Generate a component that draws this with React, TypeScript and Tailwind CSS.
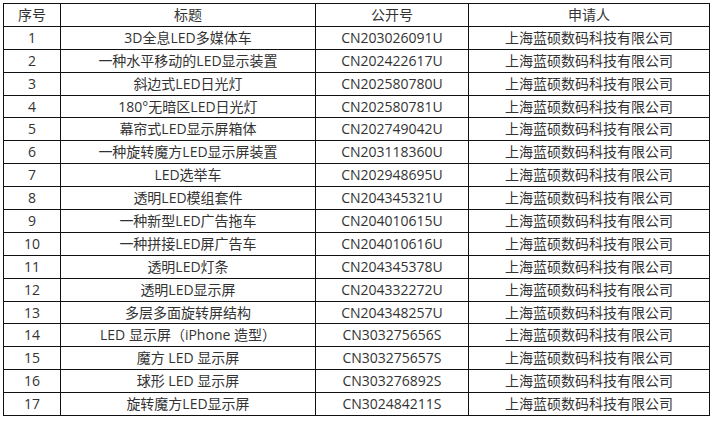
import React from "react";

const rows: [string, string, string][] = [
  ["1", "3D全息LED多媒体车", "CN203026091U"],
  ["2", "一种水平移动的LED显示装置", "CN202422617U"],
  ["3", "斜边式LED日光灯", "CN202580780U"],
  ["4", "180°无暗区LED日光灯", "CN202580781U"],
  ["5", "幕帘式LED显示屏箱体", "CN202749042U"],
  ["6", "一种旋转魔方LED显示屏装置", "CN203118360U"],
  ["7", "LED选举车", "CN202948695U"],
  ["8", "透明LED模组套件", "CN204345321U"],
  ["9", "一种新型LED广告拖车", "CN204010615U"],
  ["10", "一种拼接LED屏广告车", "CN204010616U"],
  ["11", "透明LED灯条", "CN204345378U"],
  ["12", "透明LED显示屏", "CN204332272U"],
  ["13", "多层多面旋转屏结构", "CN204348257U"],
  ["14", "LED 显示屏（iPhone 造型）", "CN303275656S"],
  ["15", "魔方 LED 显示屏", "CN303275657S"],
  ["16", "球形 LED 显示屏", "CN303276892S"],
  ["17", "旋转魔方LED显示屏", "CN302484211S"],
];

export default function App() {
  const cell = "border border-[#111] text-center align-middle p-0 leading-none";
  return (
    <div className="w-[713px] h-[421px] bg-white pt-[3px] pl-[3px]" style={{ fontFamily: '"Open Sans", "Noto Sans CJK SC", sans-serif' }}>
      <table className="border-collapse text-[14px] text-[#333] table-fixed w-[706px]">
        <colgroup>
          <col className="w-[57px]" />
          <col className="w-[255px]" />
          <col className="w-[153px]" />
          <col className="w-[241px]" />
        </colgroup>
        <tbody>
          <tr className="h-[22.9px]">
            <td className={cell}>序号</td>
            <td className={cell}>标题</td>
            <td className={cell}>公开号</td>
            <td className={cell}>申请人</td>
          </tr>
          {rows.map((r) => (
            <tr key={r[0]} className="h-[22.9px]">
              <td className={cell}>{r[0]}</td>
              <td className={cell}>{r[1]}</td>
              <td className={cell}>{r[2]}</td>
              <td className={cell}>上海蓝硕数码科技有限公司</td>
            </tr>
          ))}
        </tbody>
      </table>
    </div>
  );
}
